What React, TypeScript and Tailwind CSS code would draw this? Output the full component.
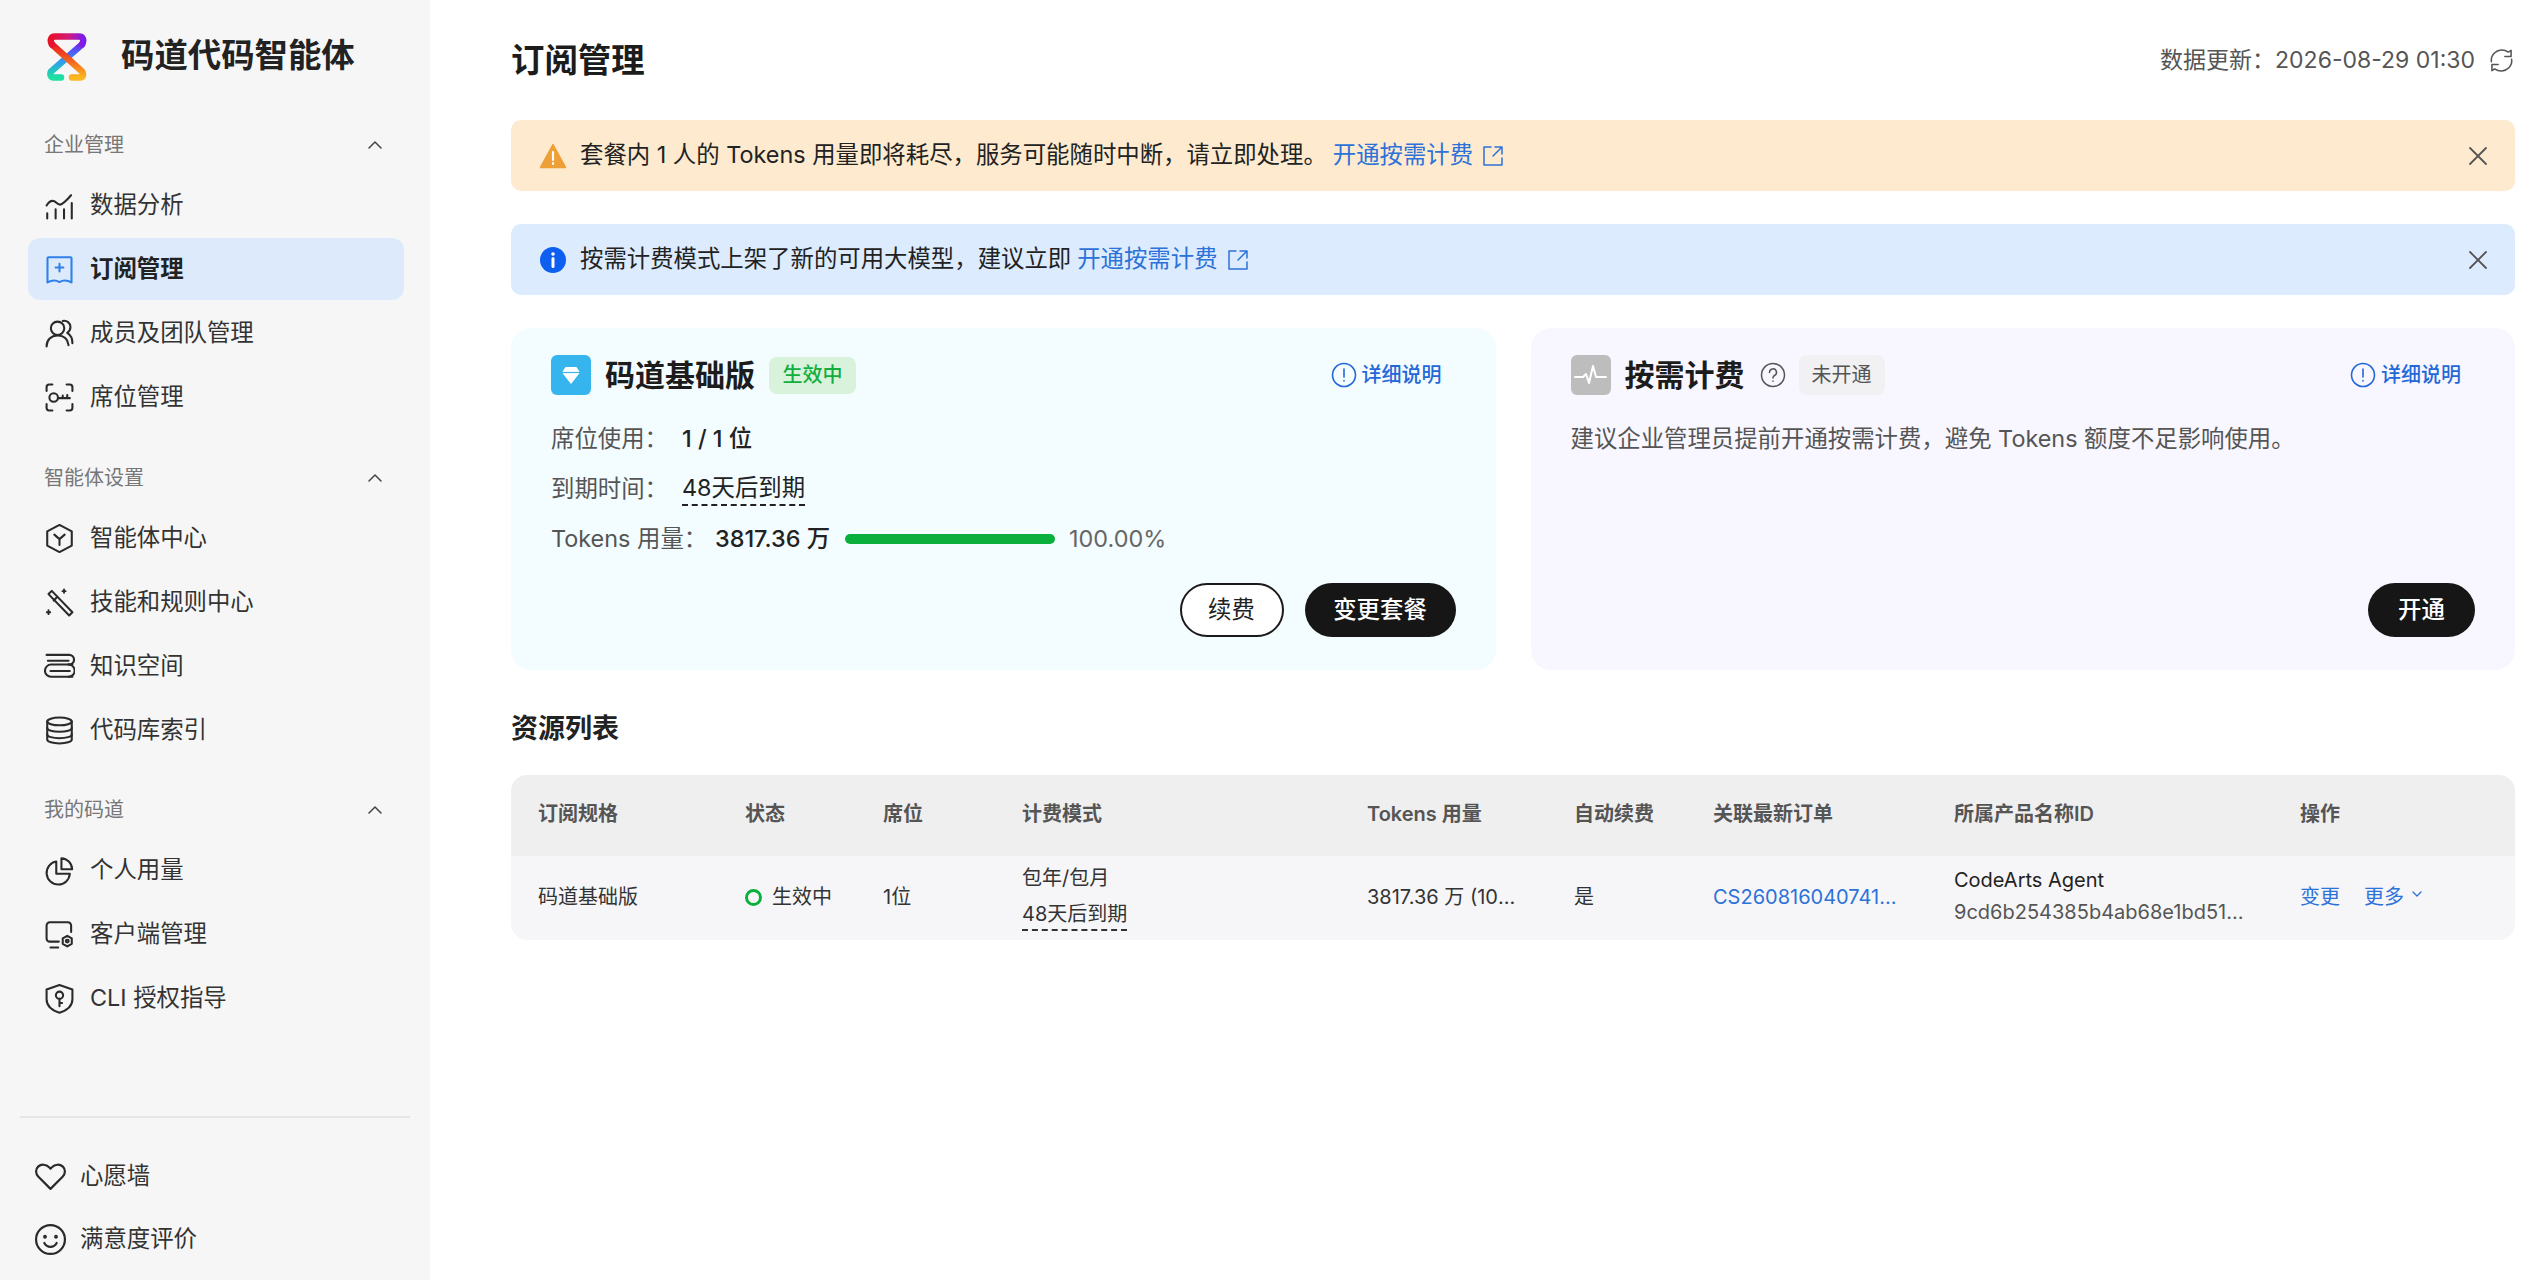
import React from "react";

const S = ({ children, c = "#2a2a2a", w = 31, sw = 1.6 }: { children: React.ReactNode; c?: string; w?: number; sw?: number }) => (
  <svg width={w} height={w} viewBox="0 0 24 24" fill="none" stroke={c} strokeWidth={sw} strokeLinecap="round" strokeLinejoin="round" className="shrink-0">
    {children}
  </svg>
);

const icons: Record<string, React.ReactNode> = {
  chart: (
    <S>
      <path d="M2 12c1.500-2.500 3.500-4 5.500-3.500 1.500.3 2.500 2.500 4.500 2.800 2.500.3 6-3.800 9-7.300" />
      <path d="M2.500 22v-4M9 22v-7M15.500 22v-7M21.500 22V10" />
    </S>
  ),
  sub: (
    <S c="#2f80e8">
      <path d="M3.500 2.500h17a.8.800 0 0 1 .8.800V22c-3.500-2-6.500-2-9.300-.3-2.800-1.700-5.800-1.700-9.300.3V3.300a.8.800 0 0 1 .8-.8z" />
      <path d="M12 7.500v6M9 10.500h6" />
    </S>
  ),
  users: (
    <S>
      <circle cx="10.500" cy="8" r="5.200" />
      <path d="M2 22c0-5 3.500-8.500 8.500-8.500s8 3 8.500 7.500" />
      <path d="M14.500 2.300c3-.8 6 1.500 6 4.700 0 2-1 3.500-2.500 4.500 2.500 1.500 4 4.500 4 8" />
    </S>
  ),
  seat: (
    <S>
      <path d="M2 7V4a2 2 0 0 1 2-2h2.500M17.500 2H20a2 2 0 0 1 2 2v3M22 17v3a2 2 0 0 1-2 2h-2.500M6.500 22H4a2 2 0 0 1-2-2v-3" />
      <circle cx="7.500" cy="12" r="3.300" />
      <path d="M11 12.500h9M14.500 12.500v-2M18 12.500V10" />
    </S>
  ),
  hex: (
    <S>
      <path d="M12 1.500l9.500 5v11L12 22.500l-9.500-5v-11z" />
      <path d="M8 9l4 3.500L16 9M12 12.500V17" />
    </S>
  ),
  wand: (
    <S>
      <path d="M6 3l-2.500 2.500 16 16.500 2.500-2.500z" />
      <path d="M10 8l-2.500 2.500" />
      <path d="M15.500 2v2.500M14.300 3.200h2.400M3.500 18v3M2.200 19.500h2.600" strokeWidth="1.500" />
    </S>
  ),
  books: (
    <S>
      <path d="M2 3h17.500a3.500 3.500 0 0 1 0 7.500H5.500a4.500 4.500 0 0 0 0 9.500H22" />
      <path d="M3 7.500h16M19 10.500h3M5 15.500h15" />
      <path d="M19 10.500a4.500 4.500 0 0 1 0 9.500" />
    </S>
  ),
  db: (
    <S>
      <ellipse cx="12" cy="5" rx="9.500" ry="3" />
      <path d="M2.500 5v14c0 1.700 4.300 3 9.500 3s9.500-1.300 9.500-3V5" />
      <path d="M2.500 10c0 1.700 4.300 3 9.500 3s9.500-1.300 9.500-3M2.500 15c0 1.700 4.300 3 9.500 3s9.500-1.300 9.500-3" />
    </S>
  ),
  pie: (
    <S>
      <path d="M9.500 5A9 9 0 1 0 20 14.500h-10.500z" />
      <path d="M13.500 2.500c4.500.3 8 3.800 8.300 8.500h-8.300z" />
    </S>
  ),
  client: (
    <S>
      <path d="M21 10V5a2.500 2.500 0 0 0-2.500-2.500h-14A2.500 2.500 0 0 0 2 5v10a2.500 2.500 0 0 0 2.500 2.500h7" />
      <path d="M5 22h6" />
      <path d="M18 13l3.500 2v4.200l-3.500 2-3.500-2V15z" />
      <circle cx="18" cy="17.100" r="1.100" />
    </S>
  ),
  shield: (
    <S>
      <path d="M12 1.500l10 3.500v7.500c0 4.800-4 8.500-10 10.500C6 21 2 17.300 2 12.500V5z" />
      <circle cx="12" cy="9.500" r="2.800" />
      <path d="M12 12.300V18M12 15.500h2" />
    </S>
  ),
  heart: (
    <S w={33}>
      <path d="M12 21L3.200 12.200C1 10 1 6.700 3 4.800 5.200 2.800 8.800 3 11 5.300l1 1 1-1c2.200-2.300 5.800-2.500 8-.5 2 1.900 2 5.200-.2 7.400z" />
    </S>
  ),
  smile: (
    <S w={33}>
      <circle cx="12" cy="12" r="10.500" />
      <path d="M7.500 14.500c1 1.800 2.700 2.800 4.500 2.800s3.500-1 4.500-2.800" />
      <circle cx="8" cy="10" r=".6" fill="#2a2a2a" />
      <circle cx="16" cy="10" r=".6" fill="#2a2a2a" />
    </S>
  ),
};

const Logo = () => (
  <svg width="40" height="48" viewBox="0 0 40 48" fill="none" strokeWidth="6.500" strokeLinecap="round" className="shrink-0">
    <defs>
      <linearGradient id="gTop" x1="0" y1="0" x2="1" y2="0">
        <stop offset="0" stopColor="#e8102a" />
        <stop offset=".55" stopColor="#d21a7a" />
        <stop offset="1" stopColor="#7a1bf0" />
      </linearGradient>
      <linearGradient id="gA" x1="0" y1="0" x2="0" y2="1">
        <stop offset="0" stopColor="#ea1c24" />
        <stop offset=".5" stopColor="#f5641f" />
        <stop offset="1" stopColor="#fbb81e" />
      </linearGradient>
      <linearGradient id="gB" x1="0" y1="0" x2="0" y2="1">
        <stop offset="0" stopColor="#6a28f2" />
        <stop offset=".5" stopColor="#2f9cf0" />
        <stop offset="1" stopColor="#1ee0a0" />
      </linearGradient>
    </defs>
    <path d="M35 11.500L4 38.500C2.500 41.500 4 44.500 6.500 44.500H14" stroke="url(#gB)" />
    <path d="M5 11.500L35 38.500C37 41.500 36 44.500 33 44.500H25" stroke="url(#gA)" />
    <path d="M5 11.500C2.500 7 4 3.500 8 3.500H32C36 3.500 37.500 7 35 11.500" stroke="url(#gTop)" />
  </svg>
);

const Chevron = () => (
  <svg width="16" height="16" viewBox="0 0 16 16" fill="none" stroke="#444" strokeWidth="1.500" strokeLinecap="round" strokeLinejoin="round">
    <path d="M2 11l6-6 6 6" />
  </svg>
);

const Section = ({ label, className, items }: { label: string; className: string; items: { i: string; t: string; active?: boolean }[] }) => (
  <div className={className}>
    <div className="flex h-[30px] items-center justify-between pl-[44px] pr-[47px] text-[20px] text-[#777]">
      <span>{label}</span>
      <Chevron />
    </div>
    <div className="mt-[14px] flex flex-col gap-[2px] pl-[28px] pr-[26px]">
      {items.map((it) => (
        <div key={it.t} className={`flex h-[62px] items-center gap-[15px] rounded-[12px] pl-[16px] text-[23.4px] ${it.active ? "bg-[#dceafb] font-semibold text-[#222]" : "text-[#333]"}`}>
          {icons[it.i]}
          <span>{it.t}</span>
        </div>
      ))}
    </div>
  </div>
);

const Ext = () => (
  <svg width="22" height="22" viewBox="0 0 22 22" fill="none" stroke="#2c72d9" strokeWidth="1.500" strokeLinecap="round" strokeLinejoin="round" className="shrink-0">
    <path d="M9 2H2v18h18v-7" />
    <path d="M13 2h7v7M20 2l-9 9" />
  </svg>
);

const Close = () => (
  <svg width="20" height="20" viewBox="0 0 20 20" fill="none" stroke="#555" strokeWidth="1.800" strokeLinecap="round" className="shrink-0">
    <path d="M2 2l16 16M18 2L2 18" />
  </svg>
);

const Info = () => (
  <svg width="26" height="26" viewBox="0 0 26 26" fill="none" stroke="#2468d8" strokeWidth="1.600" strokeLinecap="round" className="shrink-0">
    <circle cx="13" cy="13" r="11.500" />
    <path d="M13 7v8M13 18.500v.5" />
  </svg>
);

const Detail = () => (
  <div className="mr-[14px] ml-auto flex items-center gap-[5px] text-[20px] font-medium text-[#2468d8]">
    <Info />
    <span>详细说明</span>
  </div>
);

const Banner = ({ bg, icon, text, className }: { bg: string; icon: React.ReactNode; text: React.ReactNode; className?: string }) => (
  <div className={`flex h-[71px] items-center rounded-[10px] pl-[29px] pr-[27px] text-[23.4px] text-[#222] ${bg} ${className ?? ""}`}>
    {icon}
    <span className="ml-[14px] whitespace-nowrap pb-[2px]">{text}</span>
    <span className="ml-[6px] whitespace-nowrap pb-[2px] text-[#2c72d9]">开通按需计费</span>
    <span className="ml-[9px]"><Ext /></span>
    <span className="ml-auto"><Close /></span>
  </div>
);

const cols = "grid grid-cols-[207px_138px_139px_345px_207px_139px_241px_346px_242px]";

export default function App() {
  return (
    <div className="flex h-[1280px] w-full overflow-hidden bg-white font-[Inter,'Noto_Sans_CJK_SC',sans-serif]">
      <aside className="flex h-full w-[430px] shrink-0 flex-col bg-[#f6f6f6]">
        <div className="mt-[33px] flex h-[48px] items-center pl-[47px]">
          <Logo />
          <span className="ml-[34px] pb-[3px] text-[33.4px] font-semibold text-[#222]">码道代码智能体</span>
        </div>
        <Section
          label="企业管理"
          className="mt-[49px]"
          items={[
            { i: "chart", t: "数据分析" },
            { i: "sub", t: "订阅管理", active: true },
            { i: "users", t: "成员及团队管理" },
            { i: "seat", t: "席位管理" },
          ]}
        />
        <Section
          label="智能体设置"
          className="mt-[35px]"
          items={[
            { i: "hex", t: "智能体中心" },
            { i: "wand", t: "技能和规则中心" },
            { i: "books", t: "知识空间" },
            { i: "db", t: "代码库索引" },
          ]}
        />
        <Section
          label="我的码道"
          className="mt-[34px]"
          items={[
            { i: "pie", t: "个人用量" },
            { i: "client", t: "客户端管理" },
            { i: "shield", t: "CLI 授权指导" },
          ]}
        />
        <div className="mx-[20px] mt-auto border-t-2 border-[#e5e5e5]" />
        <div className="mt-[27px] mb-[10px] flex flex-col gap-[1px] pl-[34px] text-[23.4px] text-[#333]">
          <div className="flex h-[62px] items-center gap-[13px]">{icons.heart}<span>心愿墙</span></div>
          <div className="flex h-[62px] items-center gap-[13px]">{icons.smile}<span>满意度评价</span></div>
        </div>
      </aside>

      <main className="flex min-w-0 flex-1 flex-col pl-[81px] pr-[22px]">
        <header className="flex h-[120px] items-center justify-between">
          <h1 className="text-[33.4px] font-semibold text-[#1c1c1c]">订阅管理</h1>
          <div className="flex items-center gap-[13px] text-[23px] text-[#555]">
            <span>数据更新：2026-08-29 01:30</span>
            <svg width="27" height="27" viewBox="0 0 24 24" fill="none" stroke="#555" strokeWidth="1.400" strokeLinecap="round" strokeLinejoin="round">
              <path d="M3 13a9 9 0 0 1 2.500-7.500A9.500 9.500 0 0 1 18 4.500l2.500-1.500v5.500H15" />
              <path d="M21 11a9 9 0 0 1-2.500 7.500A9.500 9.500 0 0 1 6 19.500L3.500 21v-5.500H9" />
            </svg>
          </div>
        </header>

        <Banner
          bg="bg-[#fdeacf]"
          icon={
            <svg width="26" height="26" viewBox="0 0 26 26" className="shrink-0">
              <path d="M13 1.500L25.500 24.500H.5z" fill="#ee9f35" stroke="#ee9f35" strokeWidth="1.500" strokeLinejoin="round" />
              <path d="M13 9v8M13 20v1" stroke="#fff" strokeWidth="2.200" strokeLinecap="round" />
            </svg>
          }
          text="套餐内 1 人的 Tokens 用量即将耗尽，服务可能随时中断，请立即处理。"
        />
        <Banner
          bg="bg-[#dcebfd]"
          className="mt-[33px]"
          icon={
            <svg width="26" height="26" viewBox="0 0 26 26" className="shrink-0">
              <circle cx="13" cy="13" r="13" fill="#0e5fef" />
              <path d="M13 11.500v8" stroke="#fff" strokeWidth="3" strokeLinecap="round" />
              <circle cx="13" cy="7" r="1.800" fill="#fff" />
            </svg>
          }
          text="按需计费模式上架了新的可用大模型，建议立即"
        />

        <div className="mt-[33px] grid h-[342px] grid-cols-2 gap-[35px]">
          <section className="flex flex-col rounded-[20px] bg-[#f3fcff] pl-[40px] pr-[40px] pt-[27px] pb-[33px]">
            <div className="flex h-[40px] items-center">
              <span className="flex h-[40px] w-[40px] items-center justify-center rounded-[6px] bg-[#36b4ee]">
                <svg width="18" height="20" viewBox="0 0 18 20">
                  <path d="M3.500 2h11L18 7.500 9 19 0 7.500z" fill="#fff" />
                  <path d="M0 7.500h18" stroke="#36b4ee" strokeWidth="1.200" />
                </svg>
              </span>
              <h2 className="ml-[14px] text-[30px] font-semibold text-[#1c1c1c]">码道基础版</h2>
              <span className="ml-[14px] flex h-[37px] w-[87px] items-center justify-center rounded-[8px] bg-[#d9f2dc] text-[20px] font-medium text-[#12ae3e]">生效中</span>
              <Detail />
            </div>
            <div className="mt-[19px] flex h-[50px] items-center text-[23.4px]">
              <span className="w-[131px] text-[#555]">席位使用：</span>
              <span className="font-medium text-[#222]">1 / 1 位</span>
            </div>
            <div className="flex h-[50px] items-center text-[23.4px]">
              <span className="w-[131px] text-[#555]">到期时间：</span>
              <span className="border-b-2 border-dashed border-[#222] leading-[32px] text-[#222]">48天后到期</span>
            </div>
            <div className="flex h-[50px] items-center text-[23.4px]">
              <span className="w-[164px] text-[#555]">Tokens 用量：</span>
              <span className="font-medium text-[#222]">3817.36 万</span>
              <span className="ml-[15px] h-[10px] w-[210px] rounded-full bg-[#0bb03c]" />
              <span className="ml-[14px] text-[#666]">100.00%</span>
            </div>
            <div className="mt-auto flex justify-end gap-[21px] text-[23.4px]">
              <button className="h-[54px] w-[104px] rounded-full border-2 border-[#1a1a1a] bg-white text-[#222]">续费</button>
              <button className="h-[54px] w-[151px] rounded-full bg-[#161616] font-medium text-white">变更套餐</button>
            </div>
          </section>

          <section className="flex flex-col rounded-[20px] bg-[#f8f7ff] pl-[40px] pr-[40px] pt-[27px] pb-[33px]">
            <div className="flex h-[40px] items-center">
              <span className="flex h-[40px] w-[40px] items-center justify-center rounded-[6px] bg-[#bdbdbd]">
                <svg width="34" height="26" viewBox="0 0 34 26" fill="none" stroke="#fff" strokeWidth="2" strokeLinejoin="round" strokeLinecap="round">
                  <path d="M1 15h8l3-3 3 9 4-17 3 11h10" />
                </svg>
              </span>
              <h2 className="ml-[14px] text-[30px] font-semibold text-[#1c1c1c]">按需计费</h2>
              <svg width="26" height="26" viewBox="0 0 26 26" fill="none" stroke="#555" strokeWidth="1.500" strokeLinecap="round" className="ml-[15px] shrink-0">
                <circle cx="13" cy="13" r="11.500" />
                <path d="M9.500 10.500a3.500 3.500 0 1 1 5 3c-1 .6-1.500 1.200-1.500 2.500M13 19v.3" />
              </svg>
              <span className="ml-[13px] flex h-[40px] w-[86px] items-center justify-center rounded-[8px] bg-[#f1f1f3] text-[20px] text-[#555]">未开通</span>
              <Detail />
            </div>
            <p className="mt-[19px] flex h-[50px] items-center text-[23.4px] text-[#555]">建议企业管理员提前开通按需计费，避免 Tokens 额度不足影响使用。</p>
            <div className="mt-auto flex justify-end">
              <button className="h-[54px] w-[107px] rounded-full bg-[#161616] text-[23.4px] font-medium text-white">开通</button>
            </div>
          </section>
        </div>

        <h2 className="mt-[39px] flex h-[40px] items-center text-[27px] font-semibold text-[#222]">资源列表</h2>

        <div className="mt-[26px] overflow-hidden rounded-[16px] text-[20px]">
          <div className={`${cols} h-[81px] items-center bg-[#efeff0] pb-[3px] font-semibold text-[#555]`}>
            {["订阅规格", "状态", "席位", "计费模式", "Tokens 用量", "自动续费", "关联最新订单", "所属产品名称ID", "操作"].map((h) => (
              <div key={h} className="pl-[27px]">{h}</div>
            ))}
          </div>
          <div className={`${cols} h-[84px] items-center bg-[#f6f6f8] pb-[2px] text-[#333]`}>
            <div className="pl-[27px]">码道基础版</div>
            <div className="flex items-center gap-[10px] pl-[27px]">
              <span className="h-[17px] w-[17px] rounded-full border-[3.5px] border-[#0bb03c]" />
              <span>生效中</span>
            </div>
            <div className="pl-[27px]">1位</div>
            <div className="flex flex-col items-start pl-[27px]">
              <span className="mb-[6px] leading-[30px]">包年/包月</span>
              <span className="border-b-2 border-dashed border-[#333] leading-[30px]">48天后到期</span>
            </div>
            <div className="truncate pl-[27px] pr-[30px]">3817.36 万 (100.00%)</div>
            <div className="pl-[27px]">是</div>
            <div className="truncate px-[27px] text-[#2c72d9]">CS2608160407418825</div>
            <div className="mb-[2px] min-w-0 pl-[27px] pr-[29px]">
              <div className="leading-[32px] text-[#222]">CodeArts Agent</div>
              <div className="truncate leading-[32px] text-[#555]">9cd6b254385b4ab68e1bd51f7a4c20e1</div>
            </div>
            <div className="flex items-center pl-[27px] text-[#2c72d9]">
              <span>变更</span>
              <span className="ml-[24px]">更多</span>
              <svg width="12" height="12" viewBox="0 0 12 12" fill="none" stroke="#2c72d9" strokeWidth="1.300" strokeLinecap="round" strokeLinejoin="round" className="ml-[7px] mb-[6px]">
                <path d="M2 4l4 4 4-4" />
              </svg>
            </div>
          </div>
        </div>
      </main>
    </div>
  );
}
